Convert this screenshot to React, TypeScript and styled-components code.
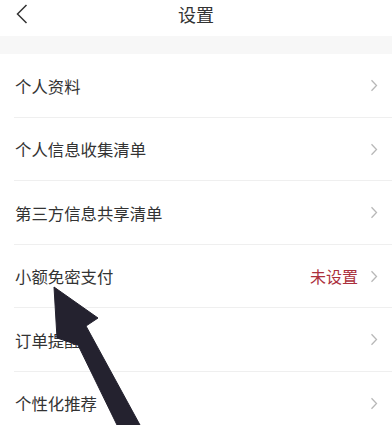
import React from "react";
import styled, { createGlobalStyle } from "styled-components";

const Global = createGlobalStyle`
  html, body { margin: 0; padding: 0; background: #ffffff; }
  body { font-family: "Noto Sans CJK SC", "Noto Sans", sans-serif; -webkit-font-smoothing: antialiased; }
  * { box-sizing: border-box; }
`;

const Page = styled.div`
  position: relative;
  width: 392px;
  height: 425px;
  overflow: hidden;
  background: #ffffff;
`;

const Header = styled.header`
  position: relative;
  height: 36px;
  display: flex;
  align-items: center;
  justify-content: center;
  background: #ffffff;
`;

const BackButton = styled.button`
  position: absolute;
  left: 10px;
  top: 0;
  width: 24px;
  height: 27px;
  border: none;
  background: transparent;
  padding: 0;
  display: flex;
  align-items: center;
  justify-content: center;
`;

const Title = styled.h1`
  margin: 0;
  margin-top: -9px;
  font-size: 18px;
  font-weight: 400;
  color: #333333;
  line-height: 1;
`;

const Band = styled.div`
  height: 18px;
  background: #f7f7f7;
`;

const List = styled.ul`
  margin: 0;
  padding: 0 0 0 14px;
  list-style: none;
`;

const Row = styled.li`
  height: 63.5px;
  display: flex;
  align-items: center;
  padding-right: 14px;
  border-bottom: 1px solid #efefef;
  padding-top: 1px;
`;

const Label = styled.span`
  flex: 1;
  font-size: 16.4px;
  color: #333333;
  padding-left: 1px;
`;

const Value = styled.span`
  font-size: 16px;
  color: #ab303c;
  margin-right: 12px;
`;

const Chevron = () => (
  <svg width="8" height="13" viewBox="0 0 8 13">
    <path d="M1.5 1.2 L6.5 6.5 L1.5 11.8" fill="none" stroke="#b8b8b8" strokeWidth="1.3" />
  </svg>
);

const Overlay = styled.svg`
  position: absolute;
  left: 0;
  top: 0;
  pointer-events: none;
`;

const items: { label: string; value?: string }[] = [
  { label: "个人资料" },
  { label: "个人信息收集清单" },
  { label: "第三方信息共享清单" },
  { label: "小额免密支付", value: "未设置" },
  { label: "订单提醒" },
  { label: "个性化推荐" },
];

export default function App() {
  return (
    <Page>
      <Global />
      <Header>
        <BackButton aria-label="返回">
          <svg width="14" height="22" viewBox="0 0 14 22">
            <path d="M11.5 2 L2.5 11 L11.5 20" fill="none" stroke="#333" strokeWidth="1.5" />
          </svg>
        </BackButton>
        <Title>设置</Title>
      </Header>
      <Band />
      <List>
        {items.map((it) => (
          <Row key={it.label}>
            <Label>{it.label}</Label>
            {it.value && <Value>{it.value}</Value>}
            <Chevron />
          </Row>
        ))}
      </List>
      <Overlay width="392" height="425" viewBox="0 0 392 425">
        <polygon
          points="54,287 98,318 86,326 140,425 117,425 78,345 57,338"
          fill="#24222f"
          stroke="#24222f"
          strokeWidth="1"
          strokeLinejoin="round"
        />
      </Overlay>
    </Page>
  );
}
